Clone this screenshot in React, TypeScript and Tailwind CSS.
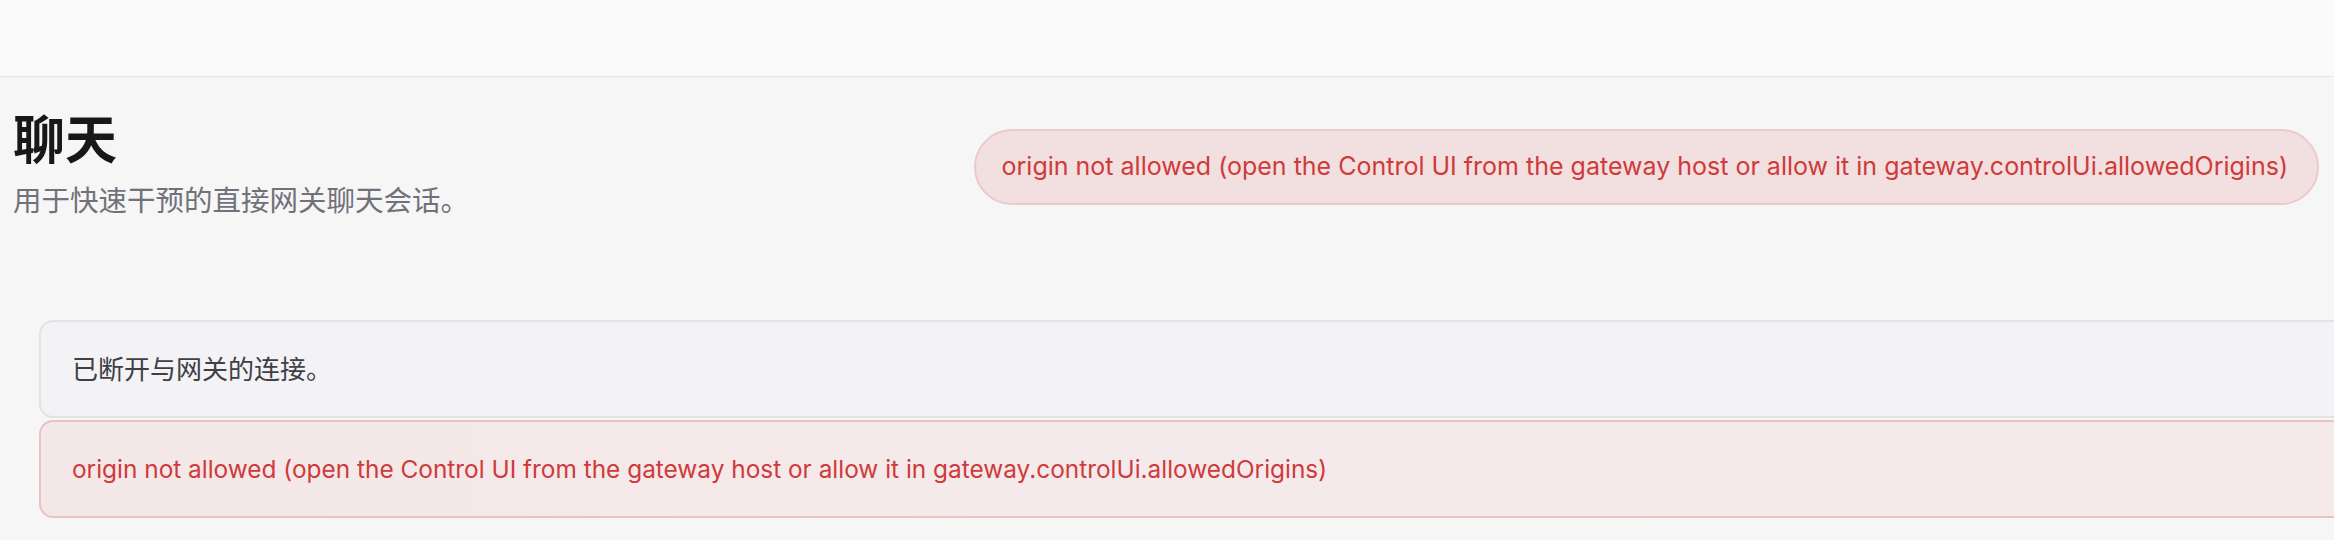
export default function App() {
  const err =
    'origin not allowed (open the Control UI from the gateway host or allow it in gateway.controlUi.allowedOrigins)'

  return (
    <div
      className="min-h-screen w-full overflow-hidden bg-[#f6f6f6]"
      style={{ fontFamily: 'Inter, "Noto Sans CJK SC", sans-serif' }}
    >
      {/* Top bar */}
      <div className="h-[77px] border-b border-[#e4e4e7] bg-[#fafafa]" />

      {/* Page header */}
      <div className="flex items-start justify-between pl-[13px] pr-[15px] pt-[33px]">
        <div>
          <h1 className="text-[52px] font-bold leading-[62px] text-[#18181b]">聊天</h1>
          <p className="mt-[10px] text-[28.5px] leading-[38px] text-[#71717a]">
            用于快速干预的直接网关聊天会话。
          </p>
        </div>
        <div className="mt-[19px] flex h-[76px] items-center rounded-full border-2 border-[#ebcaca] bg-[#f2dfdf] pl-[26px] pr-[29px]">
          <span className="whitespace-nowrap text-[25px] text-[#cf3a3a]">{err}</span>
        </div>
      </div>

      {/* Messages */}
      <div className="ml-[39px] mt-[100px] flex w-[2340px] flex-col gap-[2px]">
        <div className="flex h-[98px] items-center rounded-[14px] border-2 border-[#e2e2e7] bg-[#f3f3f5] px-[31px]">
          <span className="text-[26px] text-[#3f3f46]">已断开与网关的连接。</span>
        </div>
        <div className="flex h-[98px] items-center rounded-[14px] border-2 border-[#e8c3c5] bg-gradient-to-r from-[#f4e7e8] via-[#f5eaeb] to-[#f5e9ea] px-[31px]">
          <span className="whitespace-nowrap text-[24.4px] text-[#cf3a3a]">{err}</span>
        </div>
      </div>
    </div>
  )
}
